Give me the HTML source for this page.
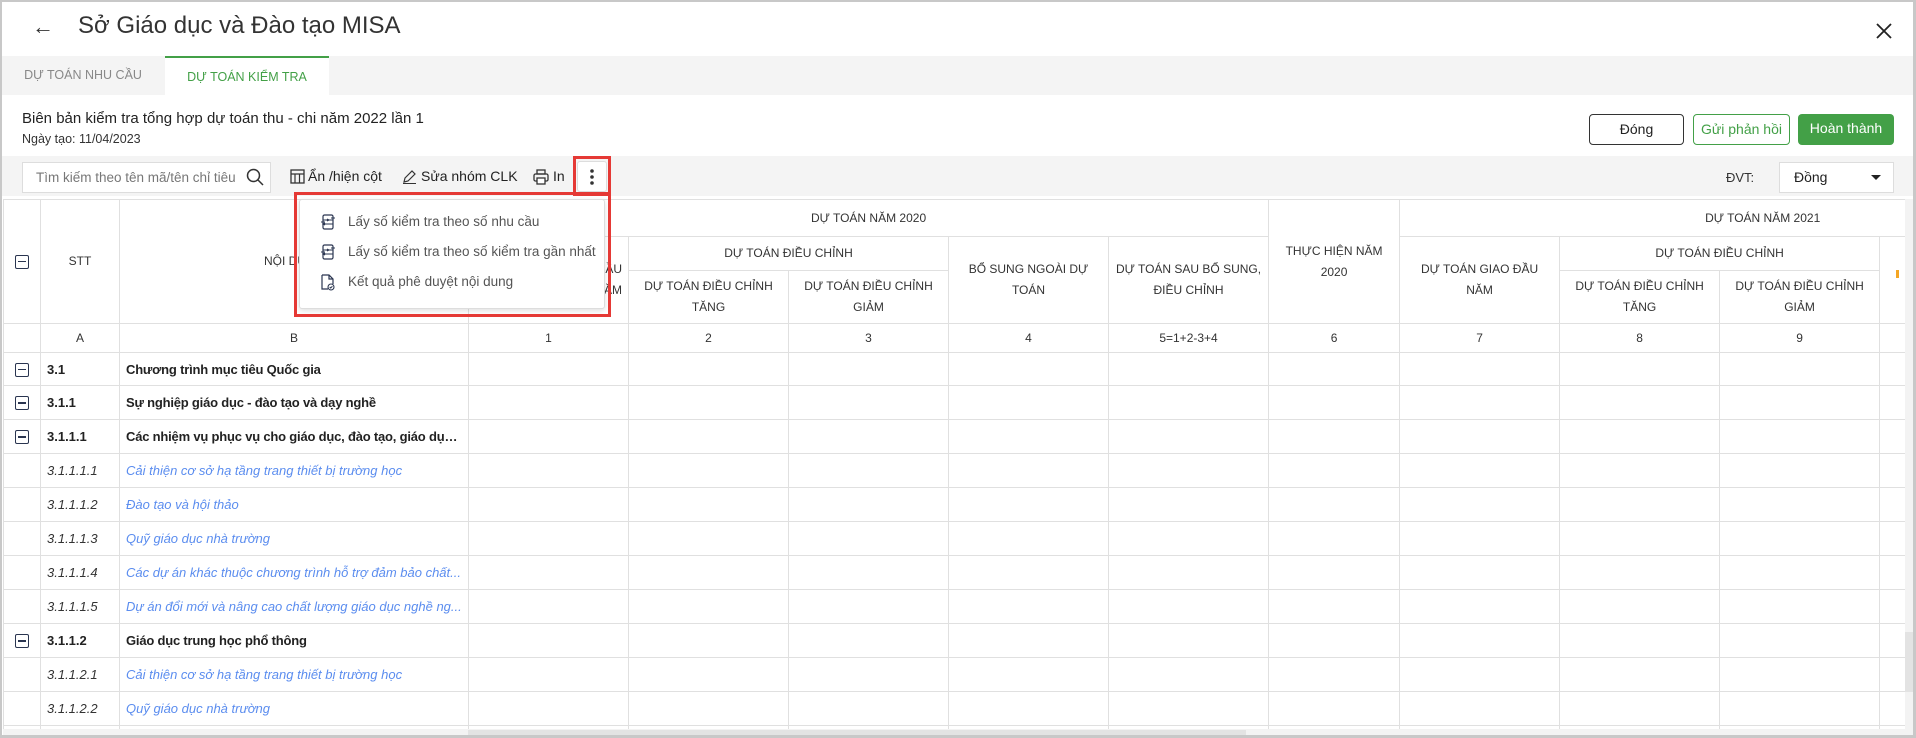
<!DOCTYPE html>
<html><head><meta charset="utf-8"><style>
*{box-sizing:border-box;margin:0;padding:0}
html,body{width:1916px;height:738px;overflow:hidden}
body{background:#fff;font-family:"Liberation Sans",Arial,sans-serif;color:#212121;position:relative}
.frame{position:absolute;left:0;top:0;width:1916px;height:738px;border:2px solid #c8c8c8;border-bottom-width:3px;border-right-width:3px;z-index:5;pointer-events:none}
.abs{position:absolute}
.title{left:78px;top:12px;font-size:24px;color:#333;font-weight:500}
.tabs{left:2px;top:56px;width:1911px;height:39px;background:#f4f4f4}
.tab{position:absolute;top:0;height:39px;line-height:39px;font-size:12.5px;text-align:center}
.btn{position:absolute;top:114px;height:31px;border-radius:4px;font-size:14px;line-height:29px;text-align:center}
.tb{left:2px;top:156px;width:1911px;height:40px;background:#f4f4f4}
.tool{position:absolute;top:168px;font-size:14px;color:#222}
.wrap{position:absolute;left:3px;top:199px;width:1910px;height:531px;overflow:hidden}
table{position:absolute;left:0;top:0;border-collapse:collapse;table-layout:fixed;width:1901px}
td,th{border:1px solid #e0e0e0;font-size:12px;font-weight:normal;color:#333;text-align:center;overflow:hidden;white-space:nowrap;padding:0 6px}
th{white-space:normal;line-height:21px}
td{font-size:13px;height:34px;text-overflow:ellipsis}
tr.idx td{height:29px;font-size:12px}
tr.first td{height:33px}
td.l{text-align:left}
.g td.l,.g td.s{font-weight:bold;color:#222}
.g td.l{letter-spacing:-0.2px}
.lf td.s{font-style:italic;color:#333}
.lf td.l{font-style:italic;color:#5b8def}
td.s{text-align:left;padding-left:6px}
.cb{display:inline-block;width:14px;height:14px;border:1.5px solid #2a3550;border-radius:2px;position:relative;vertical-align:middle}
.cb:after{content:"";position:absolute;left:2px;right:2px;top:5px;height:1.5px;background:#2a3550}
.menu{left:299px;top:199px;width:306px;height:110px;background:#fff;border:1px solid #ddd;border-radius:3px;box-shadow:0 2px 6px rgba(0,0,0,.12)}
.mi{position:absolute;left:48px;font-size:13.5px;color:#555}
.red{border:3px solid #e53935;position:absolute}
</style></head><body>
<div class="frame"></div>
<div class="abs" style="left:32px;top:14px;font-size:22px;color:#333">&#8592;</div>
<div class="abs title">Sở Giáo dục và Đào tạo MISA</div>
<svg class="abs" style="left:1876px;top:23px" width="16" height="16" viewBox="0 0 16 16"><path d="M1 1L15 15M15 1L1 15" stroke="#222" stroke-width="1.8"/></svg>
<div class="abs tabs">
 <div class="tab" style="left:0;width:162px;color:#888">DỰ TOÁN NHU CẦU</div>
 <div class="tab" style="left:163px;width:164px;background:#fff;border-top:2px solid #43a047;color:#43a047">DỰ TOÁN KIỂM TRA</div>
</div>
<div class="abs" style="left:22px;top:110px;font-size:15px;color:#222">Biên bản kiểm tra tổng hợp dự toán thu - chi năm 2022 lần 1</div>
<div class="abs" style="left:22px;top:132px;font-size:12.5px;color:#333">Ngày tạo: 11/04/2023</div>
<div class="btn" style="left:1589px;width:95px;border:1px solid #333;color:#222">Đóng</div>
<div class="btn" style="left:1693px;width:97px;border:1px solid #43a047;color:#43a047">Gửi phản hồi</div>
<div class="btn" style="left:1798px;width:96px;background:#43a047;color:#fff">Hoàn thành</div>
<div class="abs tb"></div>
<div class="abs" style="left:22px;top:162px;width:249px;height:31px;background:#fff;border:1px solid #ddd"></div>
<div class="abs" style="left:36px;top:170px;font-size:13.5px;color:#777">Tìm kiếm theo tên mã/tên chỉ tiêu</div>
<svg class="abs" style="left:246px;top:168px" width="18" height="18" viewBox="0 0 18 18"><circle cx="7.5" cy="7.5" r="6" fill="none" stroke="#333" stroke-width="1.5"/><path d="M12 12l5 5" stroke="#333" stroke-width="1.5"/></svg>
<svg class="abs" style="left:290px;top:169px" width="15" height="15" viewBox="0 0 15 15"><rect x="1" y="1" width="13" height="13" fill="none" stroke="#333" stroke-width="1.3"/><path d="M1 5h13M5 5v9M9.5 5v9" stroke="#333" stroke-width="1.2"/></svg>
<div class="tool" style="left:308px">Ẩn /hiện cột</div>
<svg class="abs" style="left:402px;top:169px" width="15" height="15" viewBox="0 0 15 15"><path d="M2 13l1-4 7-7 3 3-7 7z" fill="none" stroke="#333" stroke-width="1.2"/><path d="M1 14.5h13" stroke="#333"/></svg>
<div class="tool" style="left:421px">Sửa nhóm CLK</div>
<svg class="abs" style="left:533px;top:169px" width="16" height="16" viewBox="0 0 16 16"><rect x="4" y="1" width="8" height="4" fill="none" stroke="#333" stroke-width="1.3"/><rect x="1" y="5" width="14" height="7" rx="1.5" fill="none" stroke="#333" stroke-width="1.3"/><rect x="4" y="9" width="8" height="6" fill="#fff" stroke="#333" stroke-width="1.3"/></svg>
<div class="tool" style="left:553px">In</div>
<div class="abs" style="left:577px;top:161px;width:30px;height:31px;background:#fff;border:1px solid #ddd;border-radius:3px"></div>
<svg class="abs" style="left:588px;top:167px" width="8" height="20" viewBox="0 0 8 20"><circle cx="4" cy="4" r="1.8" fill="#333"/><circle cx="4" cy="10" r="1.8" fill="#333"/><circle cx="4" cy="16" r="1.8" fill="#333"/></svg>
<div class="red" style="left:573px;top:156px;width:38px;height:40px"></div>
<div class="abs" style="left:1726px;top:170px;font-size:13px;color:#333">ĐVT:</div>
<div class="abs" style="left:1779px;top:162px;width:115px;height:31px;background:#fff;border:1px solid #ddd"></div>
<div class="abs" style="left:1794px;top:169px;font-size:14px;color:#222">Đồng</div>
<svg class="abs" style="left:1871px;top:175px" width="10" height="6"><path d="M0 0h10L5 5z" fill="#222"/></svg>

<div class="wrap">
<table>
<colgroup><col style="width:37px"><col style="width:79px"><col style="width:349px"><col style="width:160px"><col style="width:160px"><col style="width:160px"><col style="width:160px"><col style="width:160px"><col style="width:131px"><col style="width:160px"><col style="width:160px"><col style="width:160px"><col style="width:27px"></colgroup>
<tr style="height:37px"><th rowspan="3"><span class="cb"></span></th><th rowspan="3">STT</th><th rowspan="3">NỘI DUNG</th><th colspan="5">DỰ TOÁN NĂM 2020</th><th rowspan="3">THỰC HIỆN NĂM 2020</th><th colspan="4" style="text-align:left;padding-left:305px">DỰ TOÁN NĂM 2021</th></tr>
<tr style="height:34px"><th rowspan="2" style="text-align:right">DỰ TOÁN GIAO ĐẦU NĂM</th><th colspan="2">DỰ TOÁN ĐIỀU CHỈNH</th><th rowspan="2">BỔ SUNG NGOÀI DỰ TOÁN</th><th rowspan="2">DỰ TOÁN SAU BỔ SUNG, ĐIỀU CHỈNH</th><th rowspan="2">DỰ TOÁN GIAO ĐẦU NĂM</th><th colspan="2">DỰ TOÁN ĐIỀU CHỈNH</th><th rowspan="2"></th></tr>
<tr style="height:53px"><th>DỰ TOÁN ĐIỀU CHỈNH TĂNG</th><th>DỰ TOÁN ĐIỀU CHỈNH GIẢM</th><th>DỰ TOÁN ĐIỀU CHỈNH TĂNG</th><th>DỰ TOÁN ĐIỀU CHỈNH GIẢM</th></tr>
<tr class="idx"><td></td><td>A</td><td>B</td><td>1</td><td>2</td><td>3</td><td>4</td><td>5=1+2-3+4</td><td>6</td><td>7</td><td>8</td><td>9</td><td></td></tr>
<tr class="g first"><td><span class="cb"></span></td><td class="s">3.1</td><td class="l">Chương trình mục tiêu Quốc gia</td><td></td><td></td><td></td><td></td><td></td><td></td><td></td><td></td><td></td><td></td></tr>
<tr class="g"><td><span class="cb"></span></td><td class="s">3.1.1</td><td class="l">Sự nghiệp giáo dục - đào tạo và dạy nghề</td><td></td><td></td><td></td><td></td><td></td><td></td><td></td><td></td><td></td><td></td></tr>
<tr class="g"><td><span class="cb"></span></td><td class="s">3.1.1.1</td><td class="l">Các nhiệm vụ phục vụ cho giáo dục, đào tạo, giáo dục n...</td><td></td><td></td><td></td><td></td><td></td><td></td><td></td><td></td><td></td><td></td></tr>
<tr class="lf"><td></td><td class="s">3.1.1.1.1</td><td class="l">Cải thiện cơ sở hạ tầng trang thiết bị trường học</td><td></td><td></td><td></td><td></td><td></td><td></td><td></td><td></td><td></td><td></td></tr>
<tr class="lf"><td></td><td class="s">3.1.1.1.2</td><td class="l">Đào tạo và hội thảo</td><td></td><td></td><td></td><td></td><td></td><td></td><td></td><td></td><td></td><td></td></tr>
<tr class="lf"><td></td><td class="s">3.1.1.1.3</td><td class="l">Quỹ giáo dục nhà trường</td><td></td><td></td><td></td><td></td><td></td><td></td><td></td><td></td><td></td><td></td></tr>
<tr class="lf"><td></td><td class="s">3.1.1.1.4</td><td class="l">Các dự án khác thuộc chương trình hỗ trợ đảm bảo chất...</td><td></td><td></td><td></td><td></td><td></td><td></td><td></td><td></td><td></td><td></td></tr>
<tr class="lf"><td></td><td class="s">3.1.1.1.5</td><td class="l">Dự án đổi mới và nâng cao chất lượng giáo dục nghề ng...</td><td></td><td></td><td></td><td></td><td></td><td></td><td></td><td></td><td></td><td></td></tr>
<tr class="g"><td><span class="cb"></span></td><td class="s">3.1.1.2</td><td class="l">Giáo dục trung học phổ thông</td><td></td><td></td><td></td><td></td><td></td><td></td><td></td><td></td><td></td><td></td></tr>
<tr class="lf"><td></td><td class="s">3.1.1.2.1</td><td class="l">Cải thiện cơ sở hạ tầng trang thiết bị trường học</td><td></td><td></td><td></td><td></td><td></td><td></td><td></td><td></td><td></td><td></td></tr>
<tr class="lf"><td></td><td class="s">3.1.1.2.2</td><td class="l">Quỹ giáo dục nhà trường</td><td></td><td></td><td></td><td></td><td></td><td></td><td></td><td></td><td></td><td></td></tr>
<tr><td></td><td></td><td></td><td></td><td></td><td></td><td></td><td></td><td></td><td></td><td></td><td></td><td></td></tr>
</table>
</div>
<div class="abs" style="left:3px;top:729px;width:1910px;height:7px;background:#f3f3f3"></div>
<div class="abs" style="left:468px;top:730px;width:778px;height:5px;background:#e3e3e3"></div>
<div class="abs" style="left:1905px;top:199px;width:8px;height:537px;background:#f3f3f3"></div>
<div class="abs" style="left:1905px;top:632px;width:8px;height:60px;background:#e3e3e3"></div>
<div class="abs" style="left:1896px;top:270px;width:3px;height:8px;background:#f5a623"></div>

<div class="abs menu">
 <svg class="abs" style="left:21px;top:14px" width="14" height="16" viewBox="0 0 14 16"><rect x="2" y="1" width="10" height="14" rx="1.5" fill="none" stroke="#2a3550" stroke-width="1.2"/><path d="M2 6h10M2 10h10M0 8h4M10 4h4M6 5l2 1-2 1M4 9l-2 1 2 1" stroke="#2a3550" stroke-width="1" fill="none"/></svg>
 <div class="mi" style="top:14px">Lấy số kiểm tra theo số nhu cầu</div>
 <svg class="abs" style="left:21px;top:44px" width="14" height="16" viewBox="0 0 14 16"><rect x="2" y="1" width="10" height="14" rx="1.5" fill="none" stroke="#2a3550" stroke-width="1.2"/><path d="M2 6h10M2 10h10M0 8h4M10 4h4M6 5l2 1-2 1M4 9l-2 1 2 1" stroke="#2a3550" stroke-width="1" fill="none"/></svg>
 <div class="mi" style="top:44px">Lấy số kiểm tra theo số kiểm tra gần nhất</div>
 <svg class="abs" style="left:21px;top:74px" width="14" height="17" viewBox="0 0 14 17"><path d="M1 1h7l4 4v5M1 1v14h6M8 1v4h4" fill="none" stroke="#2a3550" stroke-width="1.2"/><circle cx="10" cy="13" r="3" fill="none" stroke="#2a3550" stroke-width="1.1"/><path d="M8.7 13l1 1 1.7-1.8" stroke="#2a3550" fill="none" stroke-width="1"/></svg>
 <div class="mi" style="top:74px">Kết quả phê duyệt nội dung</div>
</div>
<div class="red" style="left:294px;top:192px;width:317px;height:125px"></div>
</body></html>
